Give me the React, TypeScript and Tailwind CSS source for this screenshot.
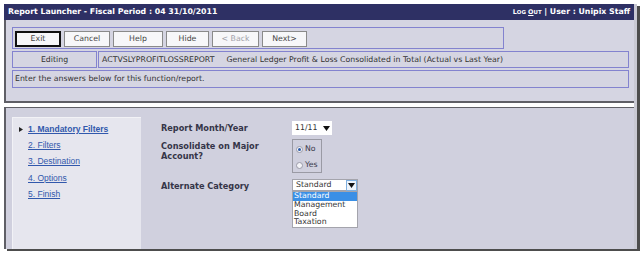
import React from 'react';

const buttons = [
  { label: 'Exit', w: 'w-[46px]', strong: true },
  { label: 'Cancel', w: 'w-[46px]' },
  { label: 'Help', w: 'w-[50px]' },
  { label: 'Hide', w: 'w-[43px]' },
  { label: '< Back', w: 'w-[47px]', disabled: true },
  { label: 'Next>', w: 'w-[45px]' },
];

const steps = ['1. Mandatory Filters', '2. Filters', '3. Destination', '4. Options', '5. Finish'];
const categories = ['Standard', 'Management', 'Board', 'Taxation'];

function Triangle() {
  return (
    <svg width="7" height="5" viewBox="0 0 7 5">
      <path d="M0 0H7L3.5 5Z" fill="#111" />
    </svg>
  );
}

function Radio({ checked, label }: { checked?: boolean; label: string }) {
  return (
    <div className="flex items-center gap-[2px] h-[16px]">
      <span className="w-[7px] h-[7px] rounded-full border border-[#9a9aa8] bg-[#f4f4f8] flex items-center justify-center">
        {checked && <span className="w-[3px] h-[3px] rounded-full bg-[#2a5aa8]" />}
      </span>
      <span className="text-[#3a3a4a]">{label}</span>
    </div>
  );
}

export default function App() {
  return (
    <div className="w-[644px] h-[254px] bg-white pt-[4px] pl-[4px] font-['DejaVu_Sans',sans-serif] text-[7.8px] text-[#333] overflow-hidden">
      <div className="w-[633px] border-r-[3px] border-[#c9c9d3] shadow-[3px_2px_0_#4d4d4d]">
        {/* title bar */}
        <div className="h-[16px] bg-[#2e3064] text-white font-bold flex items-center justify-between pl-[4px] pr-[4px]">
          <span>Report Launcher - Fiscal Period : 04 31/10/2011</span>
          <span>
            <span className="text-[6.4px]">
              L<span className="text-[5.4px]">OG</span> <span className="underline">O</span>
              <span className="text-[5.4px]">UT</span>
            </span>{' '}
            | User : Unipix Staff
          </span>
        </div>

        {/* top panel */}
        <div className="h-[83px] bg-[#d5d5e2] border-l-2 border-b-2 border-[#5f5f66] pl-[6px] pt-[7px]">
          <div className="w-[492px] h-[22px] border border-[#8383cf] pl-[2px] pt-[3px] flex gap-[3px]">
            {buttons.map((b) => (
              <div
                key={b.label}
                className={`${b.w} h-[16px] bg-[#f7f7f9] flex items-center justify-center ${
                  b.strong ? 'border-2 border-[#111]' : 'border border-[#8a8a8a]'
                } ${b.disabled ? 'text-[#a0a0a8]' : 'text-[#444]'}`}
              >
                {b.label}
              </div>
            ))}
          </div>
          <div className="flex gap-[1px] mt-[2px] h-[17px]">
            <div className="w-[85px] border border-[#8383cf] flex items-center justify-center text-[#333]">Editing</div>
            <div className="w-[531px] border border-[#8383cf] flex items-center pl-[3px] gap-[12px]">
              <span>ACTVSLYPROFITLOSSREPORT</span>
              <span>General Ledger Profit &amp; Loss Consolidated in Total (Actual vs Last Year)</span>
            </div>
          </div>
          <div className="w-[617px] h-[18px] mt-[2px] border border-[#8383cf] flex items-center pl-[2px]">
            Enter the answers below for this function/report.
          </div>
        </div>

        <div className="h-[4px] bg-white" />

        {/* bottom panel */}
        <div className="h-[142px] bg-[#d0d0de] border-l-2 border-t-[1px] border-[#5f5f66] pl-[6px] pt-[9px] flex">
          <div className="w-[129px] bg-[#e6e6ee] border-t border-l border-[#f2f2f6] pt-[3px] font-['Liberation_Sans',sans-serif] text-[8.5px] text-[#3158ac]">
            {steps.map((s, i) => (
              <div key={s} className="h-[16.3px] flex items-center">
                <span className="w-[15px] flex justify-center pl-[1px]">
                  {i === 0 && (
                    <svg width="4" height="5" viewBox="0 0 4 5">
                      <path d="M0 0L4 2.5L0 5Z" fill="#222" />
                    </svg>
                  )}
                </span>
                <span className={`underline ${i === 0 ? 'font-bold' : ''}`}>{s}</span>
              </div>
            ))}
          </div>

          <div className="pl-[20px] pt-[4px] flex flex-col">
            <div className="flex h-[14px] items-center">
              <div className="w-[131px] font-bold text-[8.2px] text-[#353548]">Report Month/Year</div>
              <div className="w-[40px] h-[14px] bg-white flex items-center justify-between pl-[3px] pr-[2px] text-[#333]">
                <span>11/11</span>
                <Triangle />
              </div>
            </div>

            <div className="flex mt-[4px]">
              <div className="w-[131px] font-bold text-[8.2px] text-[#353548] leading-[10px] pt-[2px]">
                Consolidate on Major
                <br />
                Account?
              </div>
              <div className="w-[30px] h-[34px] border border-[#9a9aa4] pl-[3px] pt-[1px]">
                <Radio checked label="No" />
                <Radio label="Yes" />
              </div>
            </div>

            <div className="flex mt-[6px]">
              <div className="w-[131px] font-bold text-[8.2px] text-[#353548] pt-[1px]">Alternate Category</div>
              <div className="w-[66px]">
                <div className="h-[12px] bg-white border border-[#a4a4ac] flex items-center justify-between pl-[3px]">
                  <span>Standard</span>
                  <span className="w-[11px] h-[11px] border border-[#7fb0e0] bg-[#eef4fb] flex items-center justify-center">
                    <Triangle />
                  </span>
                </div>
                <div className="bg-white border border-[#a4a4ac] leading-[8.8px] text-[#333]">
                  {categories.map((c, i) => (
                    <div key={c} className={`pl-[1px] ${i === 0 ? 'bg-[#3a8fe6] text-white' : ''}`}>
                      {c}
                    </div>
                  ))}
                </div>
              </div>
            </div>
          </div>
        </div>
      </div>
    </div>
  );
}
